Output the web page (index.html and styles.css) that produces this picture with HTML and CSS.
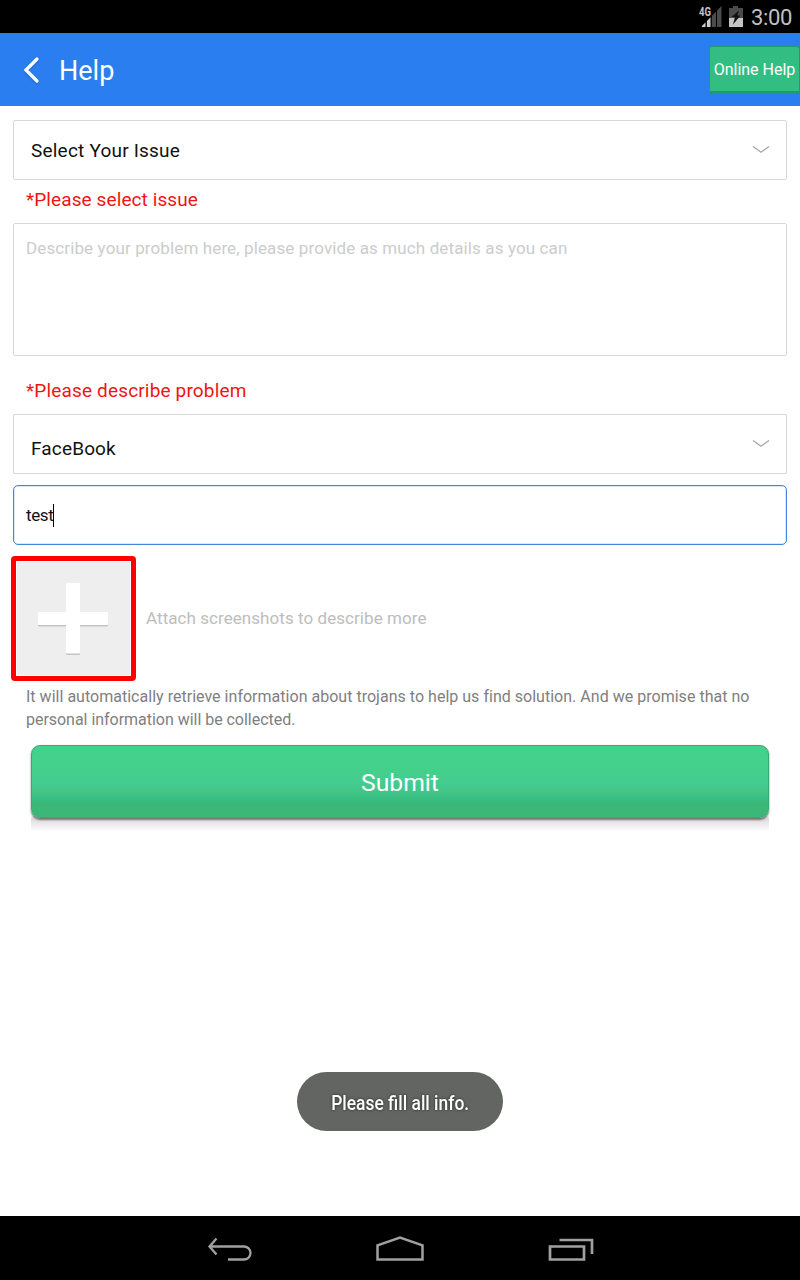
FILE: index.html
```html
<!DOCTYPE html>
<html lang="en">
<head>
<meta charset="utf-8">
<title>Help</title>
<link rel="stylesheet" href="styles.css">
</head>
<body>
<div class="screen">
  <div class="status">
    <svg class="status-icons" width="46" height="24" viewBox="0 0 46 24">
      <path d="M22.500 0V21H2z" fill="#4b4b4b"/>
      <path d="M3 21V20L6.500 16.500V21z M8 21V15L11.500 11.500V21z" fill="#d0d0d0"/>
      <path d="M7.250 14V21M12.250 9V21M17.500 4V21" stroke="#000" stroke-width="1"/>
      <rect x="0" y="0" width="12.500" height="11" fill="#000"/>
      <text x="0" y="10" class="net" textLength="12" lengthAdjust="spacingAndGlyphs">4G</text>
      <path d="M34 0h5v2h5v19H30V2h4z" fill="#4b4b4b"/>
      <path d="M30 12h14v9H30z" fill="#c4c4c4"/>
      <path d="M40 4.500L32.500 11h3.500l-2 7.500 7.500-9h-3z" fill="#111"/>
    </svg>
    <span class="clock">3:00</span>
  </div>
  <header class="bar">
    <svg class="back" width="18" height="28" viewBox="0 0 18 28"><path d="M14 3L3 14 14 25" fill="none" stroke="#fff" stroke-width="3.300" stroke-linecap="round"/></svg>
    <h1 class="title">Help</h1>
    <button class="online"><span class="t-online">Online Help</span></button>
  </header>
  <main class="form">
    <div class="box select">
      <span class="t-issue">Select Your Issue</span>
      <svg class="chev" width="18" height="10" viewBox="0 0 18 10"><path d="M1 1.500L9 7.200 17 1.500" fill="none" stroke="#a6a6a6" stroke-width="1.300"/></svg>
    </div>
    <div class="error"><span class="t-err1">*Please select issue</span></div>
    <div class="box area"><span class="t-desc">Describe your problem here, please provide as much details as you can</span></div>
    <div class="error second"><span class="t-err2">*Please describe problem</span></div>
    <div class="box select social">
      <span class="t-fb">FaceBook</span>
      <svg class="chev" width="18" height="10" viewBox="0 0 18 10"><path d="M1 1.500L9 7.200 17 1.500" fill="none" stroke="#a6a6a6" stroke-width="1.300"/></svg>
    </div>
    <div class="box input"><span class="t-test">test</span><i class="caret"></i></div>
    <div class="attach">
      <div class="add">
        <svg width="113" height="112" viewBox="0 0 113 112">
          <rect x="21" y="51.500" width="70" height="13" rx="1" fill="#c4c4c4"/>
          <rect x="49" y="22" width="14" height="71" rx="1" fill="#c4c4c4"/>
          <rect x="21" y="50" width="70" height="13" rx="1" fill="#fff"/>
          <rect x="49" y="21" width="14" height="70.500" rx="1" fill="#fff"/>
        </svg>
      </div>
      <span class="t-attach">Attach screenshots to describe more</span>
    </div>
    <p class="note"><span class="t-note1">It will automatically retrieve information about trojans to help us find solution. And we promise that no</span><br><span class="t-note2">personal information will be collected.</span></p>
    <div class="submit-wrap"><button class="submit"><span class="t-submit">Submit</span></button></div>
  </main>
  <div class="toast"><span class="toast-text">Please fill all info.</span></div>
  <nav class="nav">
    <svg width="48" height="32" viewBox="0 0 48 32"><path d="M15.500 6.500L8.500 14.500 15.500 22.500M9 14.500H43A6.500 6.500 0 0 1 43 27.500H27" transform="translate(-5 0)" fill="none" stroke="#a0a0a0" stroke-width="2.300"/></svg>
    <svg width="50" height="32" viewBox="0 0 50 32"><path d="M2.500 27.500V13.300L25 5.500 47.500 13.300V27.500z" fill="none" stroke="#a0a0a0" stroke-width="2.500"/></svg>
    <svg width="48" height="32" viewBox="0 0 48 32"><path d="M4 14.500H38V27.500H4zM13.500 8H46V22" fill="none" stroke="#a0a0a0" stroke-width="2.700"/></svg>
  </nav>
</div>
</body>
</html>
```
FILE: styles.css
```css
* { box-sizing: border-box; }
body { margin: 0; font-family: Roboto, sans-serif; background: #fff; }
span { white-space: nowrap; }
button { border: 0; padding: 0; font-family: inherit; color: #fff; }
.screen { position: relative; width: 800px; height: 1280px; display: flex; flex-direction: column; }
.status { height: 33px; background: #000; display: flex; justify-content: flex-end; align-items: center; padding-right: 8px; gap: 6px; }
.status-icons { margin-top: 2px; }
.net { font: bold 12px Roboto, sans-serif; fill: #c4c4c4; }
.clock { color: #c0c0c0; font-size: 22px; line-height: 33px; padding-top: 2px; letter-spacing: -.35px; }
.bar { height: 73px; background: #2a7eef; display: flex; align-items: center; padding-left: 23px; }
.back { filter: drop-shadow(0 1px 1px #2065c4); }
.title { margin: 0 auto 0 18px; font-size: 27px; font-weight: 400; color: #fff; padding-top: 2px; }
.online { width: 91px; height: 48px; background: #32bd82; border: 1px solid #1f9c68; border-bottom-width: 3px; border-radius: 3px; font-size: 16px; padding-top: 2px; }
.form { flex: 1; padding: 14px 13px 0; }
.box { border: 1.500px solid #d6d9db; border-radius: 2px; display: flex; }
.select { height: 60px; align-items: center; justify-content: space-between; padding: 0 16px 0 17px; font-size: 19px; color: #111; }
.t-issue { letter-spacing: .21px; }
.error { height: 43px; padding-left: 13px; line-height: 39px; font-size: 19px; color: #f01414; }
.t-err1 { letter-spacing: .1px; }
.t-err2 { letter-spacing: .16px; }
.area { height: 133px; padding: 13px 12px; font-size: 17px; line-height: 22px; color: #ccc; }
.t-desc { letter-spacing: .12px; }
.second { height: 58px; line-height: 69px; }
.social > span { padding-top: 8px; letter-spacing: .15px; }
.input { height: 60px; margin-top: 11px; border-color: #4286dc; border-radius: 5px; padding-left: 12px; align-items: center; font-size: 17px; color: #111; box-shadow: inset 0 0 0 1px #d9e8fb; }
.t-test { letter-spacing: -.4px; }
.caret { width: 1px; height: 23px; background: #000; }
.attach { display: flex; align-items: center; gap: 10px; margin: 11px 0 0 -2px; height: 125px; font-size: 17px; color: #bdbdbd; }
.t-attach { letter-spacing: .06px; padding-bottom: 2px; }
.add { width: 125px; height: 125px; border: 5px solid #f00; border-radius: 4px; background: #eee; box-shadow: inset 0 0 0 1px #fff; }
.add svg { display: block; margin: 1px; }
.note { margin: 4px 13px 0; font-size: 16px; line-height: 23px; color: #808080; }
.t-note1 { letter-spacing: .02px; }
.t-note2 { letter-spacing: -.03px; }
.submit-wrap { margin: 14px 18px 0; height: 86px; background: linear-gradient(#fff 70px, #dedcde 74px, #eeecee 80px, #fff 86px); }
.submit { display: block; width: 738px; height: 73px; border-radius: 9px; border: 1px solid #36aa70; background: linear-gradient(#43d28a 0, #43d08b 32%, #45cc90 52%, #42c486 65%, #37bd81 76%, #3bb878 80%, #3bb777 100%); font-size: 24.700px; padding-top: 2px; box-shadow: 0 1.500px 2px #777; }
.toast { position: absolute; left: 297px; top: 1072px; width: 206px; height: 59px; border-radius: 30px; background: #636562; display: flex; justify-content: center; align-items: center; }
.toast-text { color: #fff; font-size: 20.500px; font-weight: 500; transform: scaleX(.85); text-shadow: 0 0 3px #222; padding-top: 2px; }
.nav { height: 64px; background: #000; display: grid; grid-template-columns: 48px 50px 48px; justify-content: center; column-gap: 121px; padding-top: 16px; }
```
